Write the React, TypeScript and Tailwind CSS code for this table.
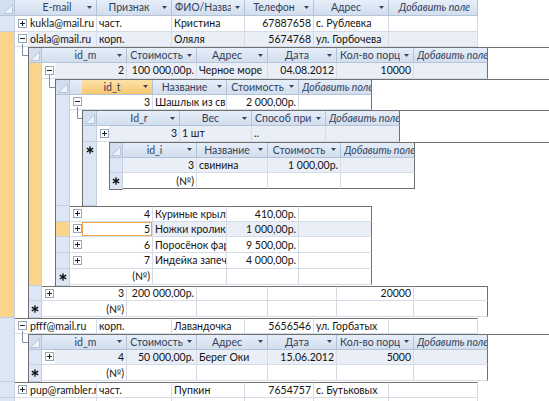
import React from 'react';

const RH = 'h-[15.75px]';
const HBG = 'bg-linear-to-b from-[#e6eef8] to-[#d2deee]';

type Col = { w: string; label: string; r?: boolean; add?: boolean; orange?: boolean };
type Rec = {
  cells?: string[];
  exp?: 'plus' | 'minus';
  orange?: boolean;
  cur?: boolean;
  focus?: number;
  isNew?: boolean;
  sub?: Tbl;
  newSub?: Tbl;
};
type Tbl = {
  top?: boolean;
  selW: string;
  expW?: string;
  expN?: number;
  cols: Col[];
  recs: Rec[];
  bottomDark?: boolean;
};

function Star() {
  return (
    <svg width="8" height="8" viewBox="0 0 8 8" className="block">
      <path d="M4 0.3V7.7M0.8 2.1L7.2 5.9M0.8 5.9L7.2 2.1" stroke="#111" strokeWidth="1.3" />
    </svg>
  );
}

function Box({ minus }: { minus?: boolean }) {
  return (
    <svg width="9" height="9" viewBox="0 0 9 9" className="block shrink-0">
      <rect x="0.5" y="0.5" width="8" height="8" fill="#fff" stroke="#97a6bc" />
      <path d="M2 4.5H7" stroke="#1d1d1d" />
      {!minus && <path d="M4.5 2V7" stroke="#1d1d1d" />}
    </svg>
  );
}

function Corner({ w }: { w: string }) {
  return (
    <div className={`${w} shrink-0 border-r border-b border-[#b3c3d8] bg-[#d3dfef] flex items-end justify-end pr-[1px] pb-[1px]`}>
      <svg width="10" height="10" viewBox="0 0 10 10" className="block">
        <path d="M9.5 0.5V9.5H0.5Z" fill="#edf3fb" stroke="#b4c4da" />
      </svg>
    </div>
  );
}

function HCell({ c, last, dark }: { c: Col; last: boolean; dark: boolean }) {
  return (
    <div
      className={`${c.w} shrink-0 flex items-center border-r border-b border-[#b3c3d8] pl-[3px] ${
        c.orange ? 'bg-linear-to-b from-[#fde2a8] to-[#f7c76f]' : HBG
      } ${last && dark ? 'border-r-[#707070]' : ''}`}
    >
      <div
        className={`flex-1 min-w-0 overflow-hidden whitespace-nowrap text-center text-[#33425b] ${
          c.add ? 'italic' : ''
        }`}
      >
        {c.label}
      </div>
      {!c.add && (
        <div className="w-[13px] shrink-0 flex justify-center">
          <svg width="5" height="3" viewBox="0 0 5 3" className="block">
            <path d="M0 0H5L2.5 3Z" fill="#3a4660" />
          </svg>
        </div>
      )}
    </div>
  );
}

function Header({ t }: { t: Tbl }) {
  return (
    <div className={`flex ${RH} ${t.top ? '' : 'border-t border-[#707070]'}`}>
      <Corner w={t.selW} />
      {t.expW && <div className={`${t.expW} shrink-0 border-b border-[#b3c3d8] ${HBG}`} />}
      {t.cols.map((c, i) => (
        <HCell key={i} c={c} last={i === t.cols.length - 1} dark={!t.top} />
      ))}
    </div>
  );
}

function Sel({ t, r, lastDark }: { t: Tbl; r: Rec; lastDark: boolean }) {
  return (
    <div
      className={`${t.selW} shrink-0 border-r border-b border-[#c4d0e2] ${
        r.orange ? 'bg-[#fbd48c]' : 'bg-[#dce6f4]'
      } ${lastDark ? 'border-b-[#707070]' : ''}`}
    >
      {r.isNew && (
        <div className={`${RH} flex items-center justify-center`}>
          <Star />
        </div>
      )}
    </div>
  );
}

function ExpCell({ t, r, after, lastDark }: { t: Tbl; r: Rec; after: boolean; lastDark: boolean }) {
  return (
    <div
      className={`${t.expW} shrink-0 relative flex items-center pl-[3px] border-b border-[#d6dce6] ${
        after ? 'border-t border-t-[#707070]' : ''
      } ${lastDark ? 'border-b-[#707070]' : ''}`}
    >
      {r.exp && <Box minus={r.exp === 'minus'} />}
      {r.exp === 'minus' && <div className="absolute left-[7px] top-[12px] bottom-[-1px] w-px bg-[#7f8ea6]" />}
    </div>
  );
}

function DCell({
  c,
  text,
  last,
  dark,
  cur,
  focus,
  after,
  lastDark,
}: {
  c: Col;
  text: string;
  last: boolean;
  dark: boolean;
  cur: boolean;
  focus: boolean;
  after: boolean;
  lastDark: boolean;
}) {
  return (
    <div
      className={`${c.w} shrink-0 flex items-center overflow-hidden whitespace-nowrap px-[2px] border-r border-b border-[#d6dce6] ${
        c.r ? 'justify-end' : ''
      } ${last && dark ? 'border-r-[#707070]' : ''} ${cur && !focus ? 'bg-[#e9eef7]' : ''} ${
        focus ? 'bg-white shadow-[inset_0_0_0_1px_#f2a84a]' : ''
      } ${after ? 'border-t border-t-[#707070]' : ''} ${lastDark ? 'border-b-[#707070]' : ''}`}
    >
      {text}
    </div>
  );
}

function DataRow({ t, r, after, lastDark }: { t: Tbl; r: Rec; after: boolean; lastDark: boolean }) {
  return (
    <div className={`flex ${RH}`}>
      {t.expW && <ExpCell t={t} r={r} after={after} lastDark={lastDark} />}
      {t.cols.map((c, i) => (
        <DCell
          key={i}
          c={c}
          text={r.isNew ? (i === 0 && !t.top ? '(№)' : '') : r.cells![i]}
          last={i === t.cols.length - 1}
          dark={!t.top}
          cur={!!r.cur}
          focus={r.focus === i}
          after={after}
          lastDark={lastDark}
        />
      ))}
    </div>
  );
}

function Spacer({ t }: { t: Tbl }) {
  const w = t.expN || 12;
  return (
    <div className={`${t.expW} shrink-0`}>
      <svg width={w} height="10" className="block">
        <path d={`M7.5 0V8.5H${w}`} fill="none" stroke="#7f8ea6" />
      </svg>
    </div>
  );
}

function Record({ t, r, after, lastDark }: { t: Tbl; r: Rec; after: boolean; lastDark: boolean }) {
  return (
    <div className="flex">
      <Sel t={t} r={r} lastDark={lastDark} />
      <div className="flex flex-col flex-1 min-w-0">
        {r.newSub ? (
          <>
            <div className="flex">
              <div className={`${t.expW} shrink-0`} />
              <div className="flex-1 min-w-0">
                <Sheet t={r.newSub} />
              </div>
            </div>
            <div className={RH} />
          </>
        ) : (
          <>
            <DataRow t={t} r={r} after={after} lastDark={lastDark} />
            {r.sub && (
              <div className="flex">
                <Spacer t={t} />
                <div className="flex-1 min-w-0">
                  <Sheet t={r.sub} />
                </div>
              </div>
            )}
          </>
        )}
      </div>
    </div>
  );
}

function Sheet({ t }: { t: Tbl }) {
  return (
    <div className={`flex flex-col ${t.top ? '' : 'border-l border-[#707070]'}`}>
      <Header t={t} />
      {t.recs.map((r, i) => (
        <Record
          key={i}
          t={t}
          r={r}
          after={i > 0 && !!t.recs[i - 1].sub}
          lastDark={!!t.bottomDark && i === t.recs.length - 1}
        />
      ))}
    </div>
  );
}

const L4: Tbl = {
  selW: 'w-[13px]',
  bottomDark: true,
  cols: [
    { w: 'w-[74px]', label: 'id_i', r: true },
    { w: 'w-[71px]', label: 'Название' },
    { w: 'w-[73px]', label: 'Стоимость', r: true },
    { w: 'w-[74px]', label: 'Добавить поле', add: true },
  ],
  recs: [{ cells: ['3', 'свинина', '1 000,00р.', ''], cur: true }, { isNew: true }],
};

const L3: Tbl = {
  selW: 'w-[14px]',
  expW: 'w-[12px]',
  expN: 12,
  cols: [
    { w: 'w-[71px]', label: 'Id_r', r: true },
    { w: 'w-[72px]', label: 'Вес' },
    { w: 'w-[74px]', label: 'Способ приготовления' },
    { w: 'w-[74px]', label: 'Добавить поле', add: true },
  ],
  recs: [{ cells: ['3', '1 шт', '..', ''], exp: 'plus', cur: true }, { isNew: true, newSub: L4 }],
};

const L2: Tbl = {
  selW: 'w-[14px]',
  expW: 'w-[12px]',
  expN: 12,
  cols: [
    { w: 'w-[71px]', label: 'id_t', r: true, orange: true },
    { w: 'w-[74px]', label: 'Название' },
    { w: 'w-[72px]', label: 'Стоимость', r: true },
    { w: 'w-[73px]', label: 'Добавить поле', add: true },
  ],
  recs: [
    { cells: ['3', 'Шашлык из свинины', '2 000,00р.', ''], exp: 'minus', sub: L3 },
    { cells: ['4', 'Куриные крылья', '410,00р.', ''], exp: 'plus' },
    { cells: ['5', 'Ножки кролика', '1 000,00р.', ''], exp: 'plus', orange: true, cur: true, focus: 0 },
    { cells: ['6', 'Поросёнок фаршированный', '9 500,00р.', ''], exp: 'plus' },
    { cells: ['7', 'Индейка запеченная', '4 000,00р.', ''], exp: 'plus' },
    { isNew: true },
  ],
};

const L1cols: Col[] = [
  { w: 'w-[72px]', label: 'id_m', r: true },
  { w: 'w-[70px]', label: 'Стоимость', r: true },
  { w: 'w-[71px]', label: 'Адрес' },
  { w: 'w-[69px]', label: 'Дата', r: true },
  { w: 'w-[77px]', label: 'Кол-во порций', r: true },
  { w: 'w-[74px]', label: 'Добавить поле', add: true },
];

const L1a: Tbl = {
  selW: 'w-[13px]',
  expW: 'w-[13px]',
  expN: 13,
  cols: L1cols,
  recs: [
    { cells: ['2', '100 000,00р.', 'Черное море', '04.08.2012', '10000', ''], exp: 'minus', orange: true, cur: true, sub: L2 },
    { cells: ['3', '200 000,00р.', '', '', '20000', ''], exp: 'plus' },
    { isNew: true },
  ],
};

const L1b: Tbl = {
  selW: 'w-[13px]',
  expW: 'w-[13px]',
  expN: 13,
  cols: L1cols,
  recs: [
    { cells: ['4', '50 000,00р.', 'Берег Оки', '15.06.2012', '5000', ''], exp: 'plus', cur: true },
    { isNew: true },
  ],
};

const L0: Tbl = {
  top: true,
  selW: 'w-[15px]',
  expW: 'w-[13px]',
  expN: 13,
  cols: [
    { w: 'w-[69px]', label: 'E-mail' },
    { w: 'w-[75px]', label: 'Признак' },
    { w: 'w-[73px]', label: 'ФИО/Название' },
    { w: 'w-[69px]', label: 'Телефон', r: true },
    { w: 'w-[75px]', label: 'Адрес' },
    { w: 'w-[89px]', label: 'Добавить поле', add: true },
  ],
  recs: [
    { cells: ['kukla@mail.ru', 'част.', 'Кристина', '67887658', 'с. Рублевка', ''], exp: 'plus' },
    { cells: ['olala@mail.ru', 'корп.', 'Оляля', '5674768', 'ул. Горбочева', ''], exp: 'minus', orange: true, cur: true, sub: L1a },
    { cells: ['pfff@mail.ru', 'корп.', 'Лавандочка', '5656546', 'ул. Горбатых', ''], exp: 'minus', sub: L1b },
    { cells: ['pup@rambler.ru', 'част.', 'Пупкин', '7654757', 'с. Бутьковых', ''], exp: 'plus' },
    { isNew: true },
  ],
};

export default function App() {
  return (
    <div className="w-[549px] h-[401px] overflow-hidden bg-white font-['Lato',sans-serif] text-[10.5px] leading-[14px] text-[#141414]">
      <Sheet t={L0} />
    </div>
  );
}
